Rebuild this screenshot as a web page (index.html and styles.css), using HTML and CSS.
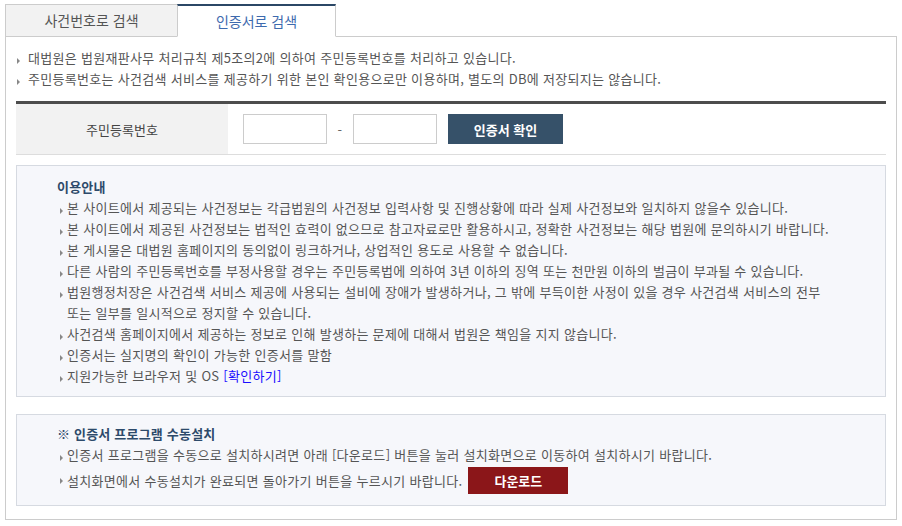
FILE: index.html
```html
<!DOCTYPE html>
<html lang="ko">
<head>
<meta charset="utf-8">
<link rel="stylesheet" href="styles.css">
</head>
<body>
<div class="page">
  <div class="tabs">
    <div class="tab">사건번호로 검색</div>
    <div class="tab active">인증서로 검색</div>
  </div>
  <div class="panel">
    <ul class="notes">
      <li>대법원은 법원재판사무 처리규칙 제5조의2에 의하여 주민등록번호를 처리하고 있습니다.</li>
      <li>주민등록번호는 사건검색 서비스를 제공하기 위한 본인 확인용으로만 이용하며, 별도의 DB에 저장되지는 않습니다.</li>
    </ul>
    <div class="form-row">
      <div class="label">주민등록번호</div>
      <div class="fields">
        <input class="ssn" type="text">
        <span class="dash">-</span>
        <input class="ssn" type="text">
        <button class="btn-cert">인증서 확인</button>
      </div>
    </div>
    <div class="info-box">
      <h3 class="box-title">이용안내</h3>
      <ul class="list">
        <li>본 사이트에서 제공되는 사건정보는 각급법원의 사건정보 입력사항 및 진행상황에 따라 실제 사건정보와 일치하지 않을수 있습니다.</li>
        <li>본 사이트에서 제공된 사건정보는 법적인 효력이 없으므로 참고자료로만 활용하시고, 정확한 사건정보는 해당 법원에 문의하시기 바랍니다.</li>
        <li>본 게시물은 대법원 홈페이지의 동의없이 링크하거나, 상업적인 용도로 사용할 수 없습니다.</li>
        <li>다른 사람의 주민등록번호를 부정사용할 경우는 주민등록법에 의하여 3년 이하의 징역 또는 천만원 이하의 벌금이 부과될 수 있습니다.</li>
        <li>법원행정처장은 사건검색 서비스 제공에 사용되는 설비에 장애가 발생하거나, 그 밖에 부득이한 사정이 있을 경우 사건검색 서비스의 전부<br>또는 일부를 일시적으로 정지할 수 있습니다.</li>
        <li>사건검색 홈페이지에서 제공하는 정보로 인해 발생하는 문제에 대해서 법원은 책임을 지지 않습니다.</li>
        <li>인증서는 실지명의 확인이 가능한 인증서를 말함</li>
        <li>지원가능한 브라우저 및 OS <a class="link" href="#">[확인하기]</a></li>
      </ul>
    </div>
    <div class="info-box install">
      <h3 class="box-title">※ 인증서 프로그램 수동설치</h3>
      <ul class="list">
        <li>인증서 프로그램을 수동으로 설치하시려면 아래 [다운로드] 버튼을 눌러 설치화면으로 이동하여 설치하시기 바랍니다.</li>
        <li class="with-btn">설치화면에서 수동설치가 완료되면 돌아가기 버튼을 누르시기 바랍니다. <button class="btn-down">다운로드</button></li>
      </ul>
    </div>
  </div>
</div>
</body>
</html>
```

FILE: styles.css
```css
* { box-sizing: border-box; }
body {
  margin: 0;
  background: #fff;
  font-family: "Noto Sans CJK KR", "Noto Sans", sans-serif;
  font-size: 13px;
  letter-spacing: 0.3px;
  color: #555;
}
.page {
  padding: 4px 5px 0 5px;
  width: 902px;
}
.tabs {
  display: flex;
  position: relative;
  z-index: 1;
  margin-bottom: -1px;
}
.tab {
  height: 33px;
  line-height: 30px;
  text-align: center;
  font-size: 14px;
  letter-spacing: 0;
  color: #555;
  background: #f2f2f2;
  border: 1px solid #ccc;
  width: 173px;
}
.tab.active {
  width: 159px;
  margin-left: -1px;
  background: #fff;
  color: #3d6aae;
  border-top: 2px solid #2b4766;
  border-bottom: 1px solid #fff;
}
.panel {
  border: 1px solid #ccc;
  padding: 10px 10px 10px 10px;
  height: 484px;
}
.notes {
  list-style: none;
  margin: 0;
  padding: 0 0 0 12px;
}
.notes li, .list li {
  position: relative;
  line-height: 21px;
}
.notes li::before, .list li::before {
  content: "";
  position: absolute;
  left: -11px;
  top: 11px;
  border-left: 3px solid #888;
  border-top: 3px solid transparent;
  border-bottom: 3px solid transparent;
}
.form-row {
  display: flex;
  margin-top: 12px;
  border-top: 3px solid #4d4d4d;
  border-bottom: 1px solid #ddd;
  height: 54px;
}
.label {
  width: 212px;
  background: #f2f2f2;
  display: flex;
  align-items: center;
  justify-content: center;
  color: #444;
  letter-spacing: 0;
}
.fields {
  display: flex;
  align-items: center;
  padding-left: 15px;
}
.ssn {
  width: 84px;
  height: 30px;
  border: 1px solid #ccc;
  background: #fff;
  margin: 0;
}
.dash {
  width: 26px;
  text-align: center;
  color: #666;
}
.btn-cert {
  margin-left: 11px;
  width: 115px;
  height: 30px;
  border: 0;
  background: #365169;
  color: #fff;
  font-family: inherit;
  font-size: 13px;
  font-weight: bold;
}
.info-box {
  margin-top: 10px;
  background: #f6f7fb;
  border: 1px solid #d6dae1;
  padding: 10px 20px 10px 40px;
}
.info-box.install {
  margin-top: 17px;
  padding-top: 8px;
  padding-bottom: 11px;
}
.box-title {
  margin: 0;
  font-size: 13px;
  line-height: 21px;
  color: #2d4a6a;
  font-weight: bold;
  letter-spacing: 0.2px;
}
.list {
  list-style: none;
  margin: 0;
  padding: 0 0 0 10px;
}
.list li::before {
  left: -7px;
}
.link {
  color: #1a0dff;
  text-decoration: none;
}
.with-btn {
  display: flex;
  align-items: center;
  gap: 6px;
  margin-top: 2px;
}
.btn-down {
  width: 100px;
  height: 27px;
  border: 0;
  background: #8b1619;
  color: #fff;
  font-family: inherit;
  font-size: 13px;
  font-weight: bold;
}
```
